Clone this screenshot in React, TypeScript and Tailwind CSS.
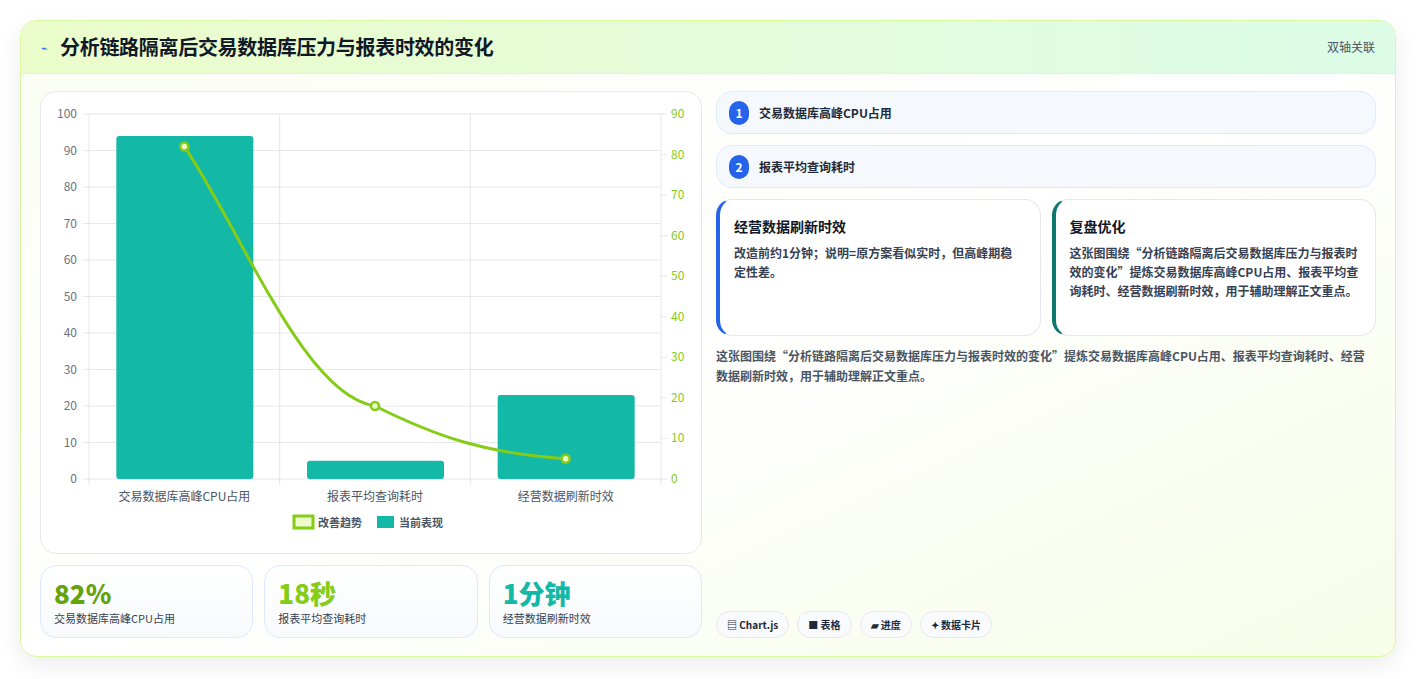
const font = { fontFamily: '"Noto Sans CJK SC", "Noto Sans", sans-serif' };

const W = 662;
const H = 461;
const x0 = 48, x1 = 620, yTop = 22, yBot = 387;
const yL = (v: number) => yBot - (v / 100) * (yBot - yTop);
const yR = (v: number) => yBot - (v / 90) * (yBot - yTop);
const cats = ["交易数据库高峰CPU占用", "报表平均查询耗时", "经营数据刷新时效"];
const bars = [94, 5, 23];
const line = [82, 18, 5];
const cw = (x1 - x0) / 3;
const cx = (i: number) => x0 + cw * i + cw / 2;

function Chart() {
  const p = line.map((v, i) => [cx(i), yR(v)]);
  const d = `M${p[0][0]},${p[0][1]} C${p[0][0] + 60},${p[0][1] + 90} ${p[1][0] - 70},${p[1][1] - 10} ${p[1][0]},${p[1][1]} C${p[1][0] + 60},${p[1][1] + 30} ${p[2][0] - 80},${p[2][1] - 5} ${p[2][0]},${p[2][1]}`;
  return (
    <svg width={W} height={H} className="block" style={font}>
      {[0, 10, 20, 30, 40, 50, 60, 70, 80, 90, 100].map((v) => (
        <g key={v}>
          <line x1={x0 - 6} x2={x1} y1={yL(v)} y2={yL(v)} stroke="#e5e7eb" />
          <text x={x0 - 12} y={yL(v) + 4} textAnchor="end" fontSize="12" fill="#6b7280">{v}</text>
        </g>
      ))}
      {[0, 10, 20, 30, 40, 50, 60, 70, 80, 90].map((v) => (
        <g key={v}>
          <line x1={x1} x2={x1 + 6} y1={yR(v)} y2={yR(v)} stroke="#e5e7eb" />
          <text x={x1 + 10} y={yR(v) + 4} fontSize="12" fill="#84cc16">{v}</text>
        </g>
      ))}
      {[0, 1, 2, 3].map((i) => (
        <line key={i} x1={x0 + cw * i} x2={x0 + cw * i} y1={yTop} y2={yBot + 6} stroke="#e5e7eb" />
      ))}
      {bars.map((v, i) => (
        <rect key={i} x={cx(i) - 68} y={yL(v)} width={137} height={yBot - yL(v)} rx="3" fill="#14b8a6" />
      ))}
      <path d={d} fill="none" stroke="#84cc16" strokeWidth="3" />
      {p.map(([x, y], i) => (
        <circle key={i} cx={x} cy={y} r="4" fill="#ecfccb" stroke="#84cc16" strokeWidth="2.5" />
      ))}
      {cats.map((c, i) => (
        <text key={i} x={cx(i)} y={yBot + 22} textAnchor="middle" fontSize="12" fill="#4b5563">{c}</text>
      ))}
      <rect x={253} y={424} width={19} height={12} fill="#ecfccb" stroke="#84cc16" strokeWidth="3" />
      <text x={277} y={435} fontSize="11" fill="#4b5563" fontWeight="600">改善趋势</text>
      <rect x={336} y={424} width={17} height={12} fill="#14b8a6" />
      <text x={358} y={435} fontSize="11" fill="#4b5563" fontWeight="600">当前表现</text>
    </svg>
  );
}

function Stat({ v, l, c }: { v: string; l: string; c: string }) {
  return (
    <div className="flex-1 rounded-2xl border border-[#dbeafe] bg-gradient-to-b from-white to-[#f8fafc] px-[13px] pt-[11px] h-[73px]">
      <div className={`text-[26px] font-extrabold leading-[32px] ${c}`}>{v}</div>
      <div className="text-[11px] text-[#374151] mt-[1px]">{l}</div>
    </div>
  );
}

export default function App() {
  return (
    <div className="w-[1417px] h-[679px] bg-white p-[20px] pr-[21px]" style={font}>
      <div className="h-[637px] rounded-2xl border border-[#d9f99d] shadow-[0_8px_24px_rgba(0,0,0,0.08)] overflow-hidden bg-gradient-to-br from-[#fbfef3] via-white to-[#f7fde8] flex flex-col">
        <div className="h-[56px] flex items-center justify-between px-[20px] bg-gradient-to-r from-[#ecfccb] to-[#dcfce7] border-b border-[#e5f2d5]">
          <div className="flex items-center gap-[12px]">
            <span className="text-[11px] text-[#2563eb]">⌁</span>
            <span className="text-[20px] font-bold text-[#111827] tracking-[-0.3px]">分析链路隔离后交易数据库压力与报表时效的变化</span>
          </div>
          <span className="text-[12px] text-[#4b5563]">双轴关联</span>
        </div>
        <div className="flex-1 flex gap-[14px] px-[19px] pt-[17px] pb-[18px]">
          <div className="w-[662px] flex flex-col gap-[11px]">
            <div className="rounded-2xl border border-[#e5e7eb] bg-white overflow-hidden">
              <Chart />
            </div>
            <div className="flex gap-[11px]">
              <Stat v="82%" l="交易数据库高峰CPU占用" c="text-[#65a30d]" />
              <Stat v="18秒" l="报表平均查询耗时" c="text-[#84cc16]" />
              <Stat v="1分钟" l="经营数据刷新时效" c="text-[#14b8a6]" />
            </div>
          </div>
          <div className="flex-1 flex flex-col">
            {["交易数据库高峰CPU占用", "报表平均查询耗时"].map((t, i) => (
              <div key={i} className="h-[43px] mb-[11px] rounded-2xl border border-[#dbeafe] bg-[#f5f9fd] flex items-center px-[12px] gap-[10px]">
                <span className="w-[20px] h-[24px] rounded-full bg-[#2563eb] text-white text-[12px] font-bold flex items-center justify-center">{i + 1}</span>
                <span className="text-[12px] font-semibold text-[#1f2937]">{t}</span>
              </div>
            ))}
            <div className="flex gap-[11px] h-[137px]">
              <div className="flex-1 rounded-2xl border border-[#e5e7eb] border-l-4 border-l-[#2563eb] bg-white pl-[14px] pr-[16px] pt-[16px]">
                <div className="text-[14px] font-bold text-[#111827] mb-[6px]">经营数据刷新时效</div>
                <div className="text-[12px] font-semibold text-[#374151] leading-[19px]">改造前约1分钟；说明=原方案看似实时，但高峰期稳定性差。</div>
              </div>
              <div className="flex-1 rounded-2xl border border-[#e5e7eb] border-l-4 border-l-[#0f766e] bg-white pl-[14px] pr-[16px] pt-[16px]">
                <div className="text-[14px] font-bold text-[#111827] mb-[6px]">复盘优化</div>
                <div className="text-[12px] font-semibold text-[#374151] leading-[19px]">这张图围绕“分析链路隔离后交易数据库压力与报表时效的变化”提炼交易数据库高峰CPU占用、报表平均查询耗时、经营数据刷新时效，用于辅助理解正文重点。</div>
              </div>
            </div>
            <p className="mt-[10px] text-[12px] font-semibold text-[#4b5563] leading-[20px]">这张图围绕“分析链路隔离后交易数据库压力与报表时效的变化”提炼交易数据库高峰CPU占用、报表平均查询耗时、经营数据刷新时效，用于辅助理解正文重点。</p>
            <div className="mt-auto flex gap-[8px]">
              {["▤ Chart.js", "■ 表格", "▰ 进度", "✦ 数据卡片"].map((t) => (
                <span key={t} className="h-[27px] px-[10px] rounded-full border border-[#e5e7eb] bg-[#f8fafc] text-[10px] font-bold text-[#1f2937] flex items-center">{t}</span>
              ))}
            </div>
          </div>
        </div>
      </div>
    </div>
  );
}
